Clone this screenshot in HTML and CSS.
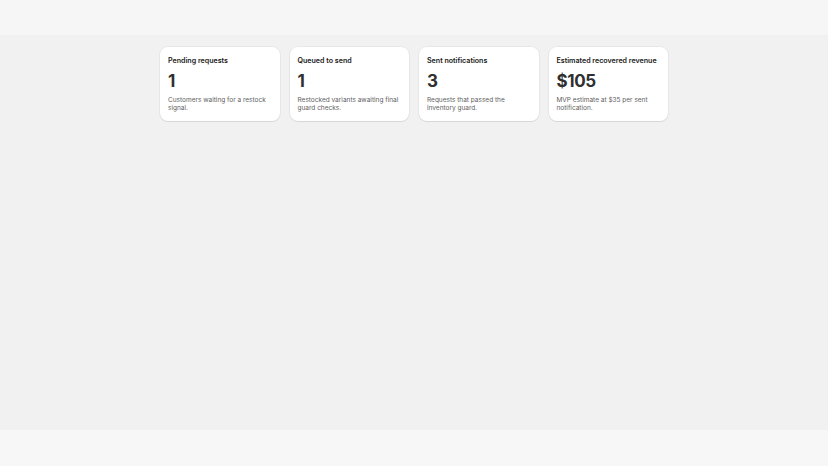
FILE: index.html
```html
<!DOCTYPE html>
<html lang="en">
<head>
    <meta charset="UTF-8">
    <meta name="viewport" content="width=device-width, initial-scale=1.0">
    <title>Restock Alerts</title>
    <link rel="stylesheet" href="styles.css">
</head>
<body>
    <header class="top-bar"></header>

    <main class="page">
        <div class="stats">
            <div class="stat-card">
                <h2>Pending requests</h2>
                <p class="stat-value">1</p>
                <p class="stat-note">Customers waiting for a restock signal.</p>
            </div>
            <div class="stat-card">
                <h2>Queued to send</h2>
                <p class="stat-value">1</p>
                <p class="stat-note">Restocked variants awaiting final guard checks.</p>
            </div>
            <div class="stat-card">
                <h2>Sent notifications</h2>
                <p class="stat-value">3</p>
                <p class="stat-note">Requests that passed the inventory guard.</p>
            </div>
            <div class="stat-card">
                <h2>Estimated recovered revenue</h2>
                <p class="stat-value">$105</p>
                <p class="stat-note">MVP estimate at $35 per sent notification.</p>
            </div>
        </div>
    </main>

    <footer class="bottom-bar"></footer>
</body>
</html>
```

FILE: styles.css
```css
* {
    box-sizing: border-box;
    margin: 0;
    padding: 0;
}

body {
    font-family: Inter, 'Noto Sans', sans-serif;
    background-color: #f1f1f1;
    color: #303030;
    height: 100vh;
    display: flex;
    flex-direction: column;
}

.top-bar {
    height: 35px;
    background-color: #f6f6f6;
}

.page {
    flex: 1;
    padding-top: 12px;
}

.bottom-bar {
    height: 36px;
    background-color: #f7f7f7;
}

.stats {
    width: 508px;
    margin: 0 auto;
    display: grid;
    grid-template-columns: repeat(4, 1fr);
    gap: 10px;
}

.stat-card {
    background: #fff;
    border-radius: 8px;
    padding: 8px 8px 8px;
    height: 74px;
    box-shadow: 0 1px 1px rgba(0, 0, 0, 0.07), 0 0 0 1px rgba(0, 0, 0, 0.04);
}

.stat-card h2 {
    font-size: 7.1px;
    font-weight: 600;
    line-height: 12px;
    color: #1a1a1a;
}

.stat-value {
    font-size: 17px;
    font-weight: 700;
    line-height: 22px;
    letter-spacing: -0.4px;
    margin-top: 3px;
    color: #303030;
}

.stat-note {
    font-size: 6.5px;
    line-height: 8px;
    margin-top: 4px;
    color: #616161;
}
```
